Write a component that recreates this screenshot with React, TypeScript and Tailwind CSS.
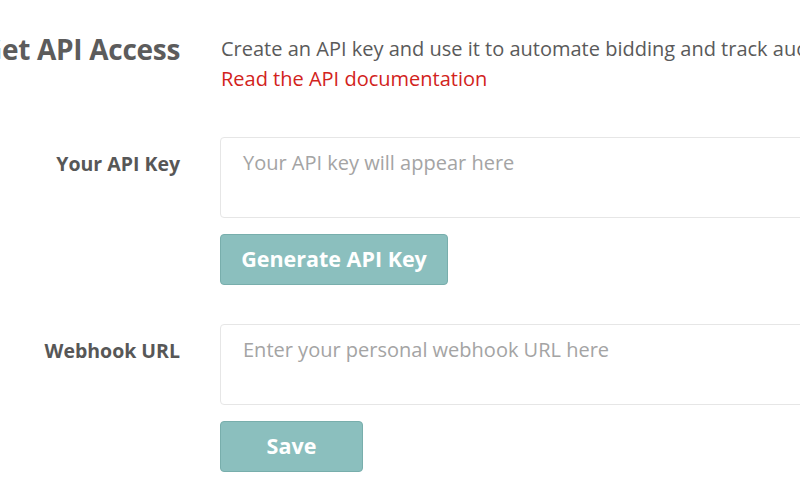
import React from 'react';

const FieldRow = ({
  label,
  placeholder,
  button,
  buttonWidth,
}: {
  label: string;
  placeholder: string;
  button: string;
  buttonWidth: string;
}) => (
  <div className="flex">
    <div className="w-[180px] shrink-0 flex justify-end pt-[14px]">
      <span className="whitespace-nowrap text-[19.5px] leading-[26px] font-bold text-[#575757]">{label}</span>
    </div>
    <div className="ml-[40px] flex flex-col">
      <textarea
        readOnly
        placeholder={placeholder}
        className="w-[640px] h-[81px] resize-none rounded-[4px] border border-[#e6e6e6] bg-white px-[22px] pt-[12px] text-[20px] leading-[26px] text-[#555] placeholder:text-[#a4a4a4] outline-none"
      />
      <button
        className={`mt-[16px] h-[51px] ${buttonWidth} rounded-[4px] border border-[#78aeac] bg-[#8bbfbe] text-[21.5px] font-bold text-white`}
      >
        {button}
      </button>
    </div>
  </div>
);

export default function App() {
  return (
    <div className="w-[800px] h-[500px] overflow-hidden bg-white font-['Open_Sans',sans-serif]">
      <div className="flex pt-[34px]">
        <div className="w-[180px] shrink-0 flex justify-end">
          <h1 className="whitespace-nowrap text-[28px] leading-[30px] font-bold tracking-[-0.3px] text-[#5c5c5c]">Get API Access</h1>
        </div>
        <div className="ml-[41px] text-[20px] leading-[30px] text-[#5a5a5a] whitespace-nowrap">
          <p>Create an API key and use it to automate bidding and track auctions</p>
          <a className="text-[#d2231c]">Read the API documentation</a>
        </div>
      </div>

      <div className="mt-[43px] flex flex-col gap-[39px]">
        <FieldRow
          label="Your API Key"
          placeholder="Your API key will appear here"
          button="Generate API Key"
          buttonWidth="w-[228px]"
        />
        <FieldRow
          label="Webhook URL"
          placeholder="Enter your personal webhook URL here"
          button="Save"
          buttonWidth="w-[143px]"
        />
      </div>
    </div>
  );
}
